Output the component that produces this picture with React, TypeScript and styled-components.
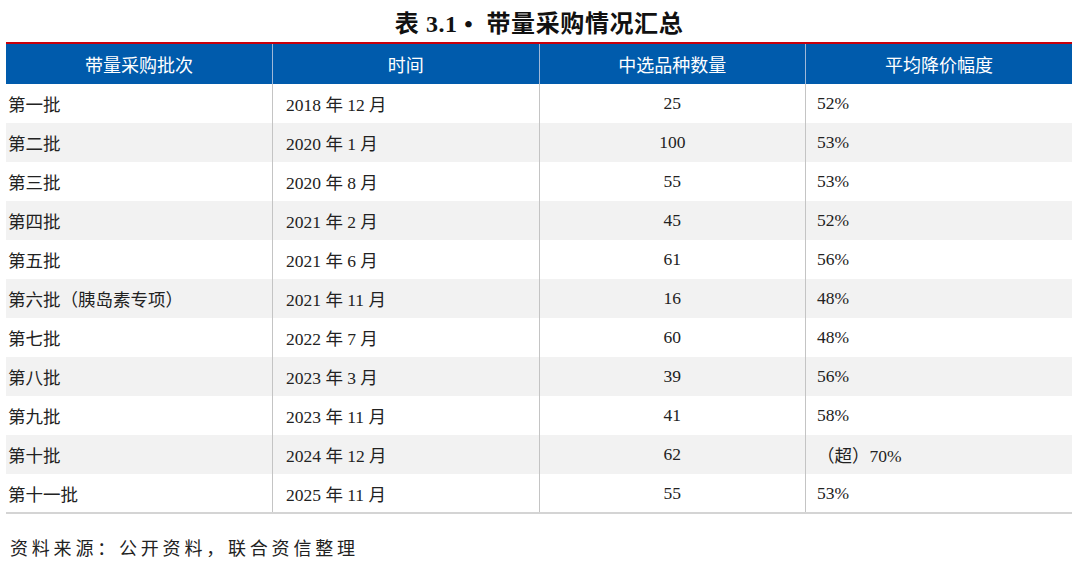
import React from 'react';
import styled, { createGlobalStyle } from 'styled-components';

const GlobalStyle = createGlobalStyle`
	html,
	body {
		margin: 0;
		padding: 0;
		background: #fff;
	}

	body {
		font-family: 'Liberation Serif', 'Noto Sans CJK SC', serif;
		color: #222;
	}
`;

const Page = styled.div`
	width: 1080px;
	height: 561px;

	display: flex;
	flex-direction: column;

	padding: 0 8px 0 6px;
	box-sizing: border-box;
`;

const Title = styled.h1`
	margin: 0;
	height: 42px;

	display: flex;
	align-items: center;
	justify-content: center;

	font-size: 24px;
	font-weight: bold;
	color: #111;
	letter-spacing: 0.6px;
`;

const Table = styled.table`
	width: 1066px;
	border-collapse: collapse;
	table-layout: fixed;

	border-top: 2px solid #c8000b;
	border-bottom: 2px solid #d4d4d4;
`;

const HeadCell = styled.th`
	height: 40px;
	padding: 0;

	background: #005bac;
	color: #fff;

	font-size: 18px;
	font-weight: normal;
	text-align: center;

	border-left: 1px solid #9fb8d8;

	&:first-child {
		border-left: none;
	}
`;

const Row = styled.tr<{ $shaded: boolean }>`
	height: 39px;
	background: ${({ $shaded }) => ($shaded ? '#f2f2f2' : '#fff')};
`;

const Cell = styled.td<{ $align?: 'left' | 'center'; $pad?: number }>`
	padding: 0 0 0 ${({ $pad }) => $pad ?? 0}px;

	font-size: 17.5px;
	color: #222;
	text-align: ${({ $align }) => $align ?? 'left'};
	white-space: nowrap;

	border-left: 1px solid #c4c4c4;

	&:first-child {
		border-left: none;
	}
`;

const Source = styled.p`
	margin: 20px 0 0 4px;

	font-size: 18px;
	letter-spacing: 3.8px;
	color: #222;
`;

const rows = [
	['第一批', '2018 年 12 月', '25', '52%'],
	['第二批', '2020 年 1 月', '100', '53%'],
	['第三批', '2020 年 8 月', '55', '53%'],
	['第四批', '2021 年 2 月', '45', '52%'],
	['第五批', '2021 年 6 月', '61', '56%'],
	['第六批（胰岛素专项）', '2021 年 11 月', '16', '48%'],
	['第七批', '2022 年 7 月', '60', '48%'],
	['第八批', '2023 年 3 月', '39', '56%'],
	['第九批', '2023 年 11 月', '41', '58%'],
	['第十批', '2024 年 12 月', '62', '（超）70%'],
	['第十一批', '2025 年 11 月', '55', '53%'],
];

export default function App(): React.ReactElement {
	return (
		<>
			<GlobalStyle />
			<Page>
				<Title>表 3.1 •&nbsp;&nbsp;带量采购情况汇总</Title>
				<Table>
					<thead>
						<tr>
							<HeadCell>带量采购批次</HeadCell>
							<HeadCell>时间</HeadCell>
							<HeadCell>中选品种数量</HeadCell>
							<HeadCell>平均降价幅度</HeadCell>
						</tr>
					</thead>
					<tbody>
						{rows.map(([batch, date, count, drop], i) => (
							<Row key={batch} $shaded={i % 2 === 1}>
								<Cell $pad={2}>{batch}</Cell>
								<Cell $pad={13}>{date}</Cell>
								<Cell $align="center">{count}</Cell>
								<Cell $pad={11}>{drop}</Cell>
							</Row>
						))}
					</tbody>
				</Table>
				<Source>资料来源：公开资料，联合资信整理</Source>
			</Page>
		</>
	);
}
